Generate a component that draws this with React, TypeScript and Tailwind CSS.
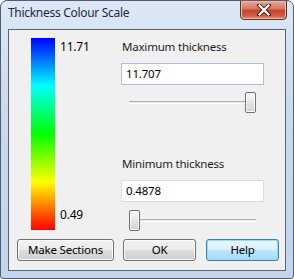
import React from "react";

const font = { fontFamily: '"Segoe UI", "Noto Sans", "Open Sans", sans-serif' };

function WinButton({ label, width, primary }: { label: string; width: string; primary?: boolean }) {
  return (
    <div
      className={`${width} h-[22px] rounded-[3px] border flex items-center justify-center text-black ${
        primary
          ? "border-[#3c7fb1] bg-[linear-gradient(#eaf6fd_0%,#d9f0fc_50%,#bee6fd_51%,#a7d9f5_100%)] shadow-[inset_0_0_0_1px_#8ee1fb]"
          : "border-[#707070] bg-[linear-gradient(#f2f2f2_0%,#ebebeb_50%,#dddddd_51%,#cfcfcf_100%)] shadow-[inset_0_0_0_1px_#fcfcfc]"
      }`}
    >
      {label}
    </div>
  );
}

function Slider({ thumbLeft }: { thumbLeft: boolean }) {
  return (
    <div className="relative h-[21px] w-[127px] ml-[8px]">
      <div className="absolute left-0 right-0 top-[9px] h-[3px] border-t border-t-[#b0b0b0] border-b border-b-white bg-[#e7eaea]" />
      <div
        className={`absolute top-0 ${thumbLeft ? "left-0" : "right-0"} w-[11px] h-[21px] rounded-[2px] border border-[#707070] bg-[linear-gradient(#fbfbfb,#e3e3e3_50%,#d3d3d3)] shadow-[inset_0_0_0_1px_#ffffff]`}
      />
    </div>
  );
}

export default function App() {
  return (
    <div
      style={font}
      className="w-[294px] h-[279px] rounded-t-[7px] rounded-b-[3px] border border-[#525e6b] bg-[linear-gradient(#dce8f5,#c9daee_40%,#c2d5ec)] flex flex-col px-[7px] pb-[7px] overflow-hidden text-[11.5px] tracking-[-0.2px]"
    >
      {/* title bar */}
      <div className="h-[28px] flex items-start justify-between">
        <div className="pt-[4px] text-[12px] tracking-[-0.3px] text-[#1e2c3c] leading-[16px]">Thickness Colour Scale</div>
        <div className="-mt-px -mr-px w-[47px] h-[20px] rounded-b-[4px] border border-[#6d2a21] bg-[linear-gradient(#e8a89b,#d4765f_45%,#c2432a_50%,#cf5c3f_80%,#e38a6a)] shadow-[inset_0_0_0_1px_#f0b8aa] flex items-center justify-center">
          <svg width="14" height="12" viewBox="0 0 14 12">
            <path d="M2 1 L12 11 M12 1 L2 11" stroke="#4b1a12" strokeWidth="4" strokeLinecap="square" />
            <path d="M2.5 1.5 L11.5 10.5 M11.5 1.5 L2.5 10.5" stroke="#ffffff" strokeWidth="2.2" strokeLinecap="square" />
          </svg>
        </div>
      </div>

      {/* client area */}
      <div className="flex-1 border border-[#5a6570] bg-[#f0f0f0] flex flex-col text-black">
        <div className="flex h-[208px]">
          <div className="w-[112px] flex pl-[22px] pt-[8px]">
            <div className="w-[24px] h-[192px] bg-[linear-gradient(#0000ff,#00ffff_25%,#00ff00_50%,#ffff00_75%,#ff0000)]" />
            <div className="ml-[5px] h-[192px] flex flex-col justify-between pt-[1px] pb-[7px] leading-[16px] text-[12px]">
              <span>11.71</span>
              <span>0.49</span>
            </div>
          </div>
          <div className="flex flex-col w-[143px] pt-[9px]">
            <div className="leading-[16px] pl-px text-[#1e1e1e]">Maximum thickness</div>
            <div className="mt-[8px] h-[22px] border border-[#abc1da] bg-white pl-[4px] leading-[20px]">11.707</div>
            <div className="mt-[7px]">
              <Slider thumbLeft={false} />
            </div>
            <div className="mt-[43px] leading-[16px] pl-px text-[#1e1e1e]">Minimum thickness</div>
            <div className="mt-[8px] h-[22px] border border-[#d8dde3] bg-white pl-[4px] leading-[20px]">0.4878</div>
            <div className="mt-[8px]">
              <Slider thumbLeft={true} />
            </div>
          </div>
        </div>
        <div className="flex pl-[8px] pt-[1px] gap-[9px]">
          <WinButton label="Make Sections" width="w-[97px]" />
          <WinButton label="OK" width="w-[73px]" />
          <div className="ml-px">
            <WinButton label="Help" width="w-[73px]" primary />
          </div>
        </div>
      </div>
    </div>
  );
}
